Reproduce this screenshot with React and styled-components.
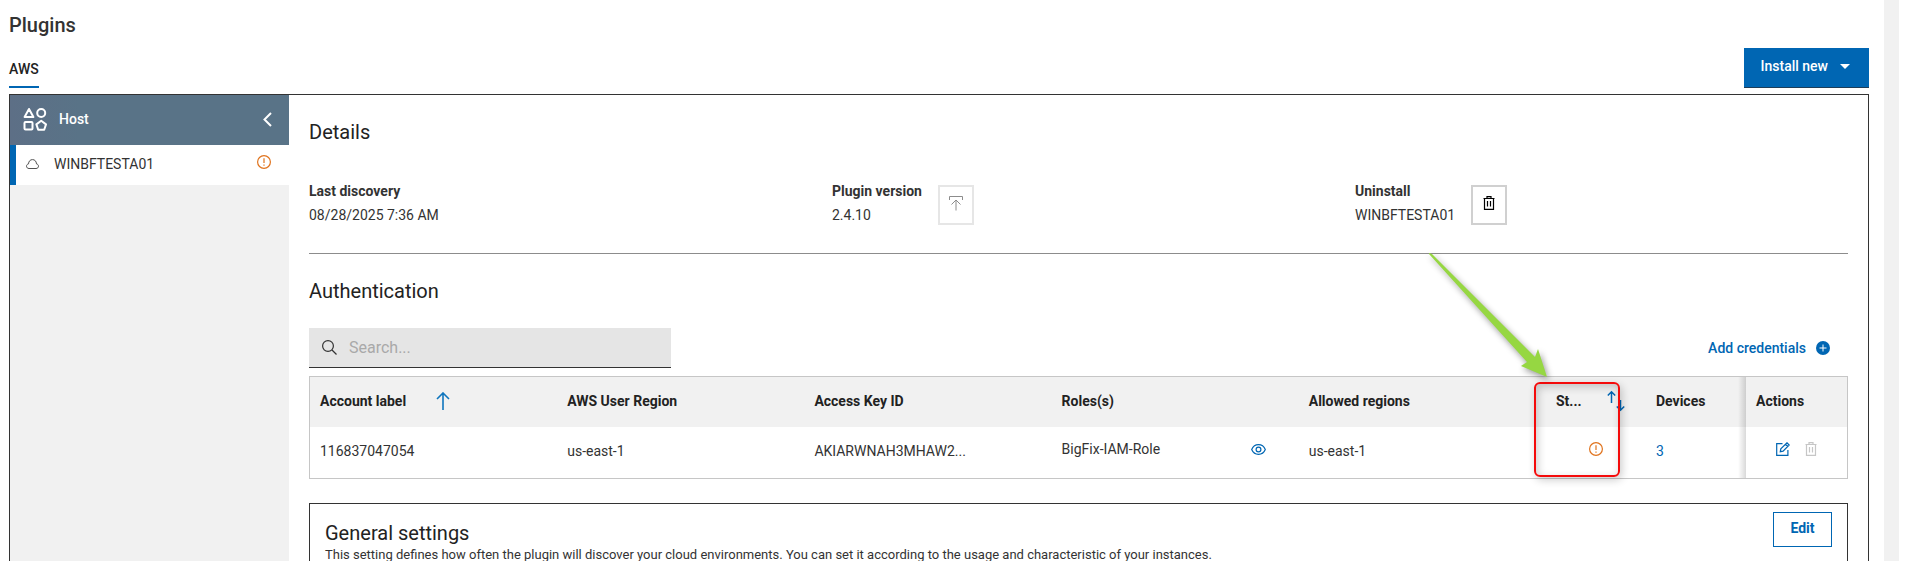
import { useState } from "react";
import styled, { createGlobalStyle, css } from "styled-components";

const GlobalStyle = createGlobalStyle`
  * {
    box-sizing: border-box;
  }
  body {
    margin: 0;
    background: #fff;
    color: #333;
    font-family: Roboto, "Liberation Sans", sans-serif;
    font-size: 14px;
    line-height: 20px;
  }
  h1, h2, p, dl, dd {
    margin: 0;
  }
  button, input {
    font: inherit;
  }
`;

const accounts = [
  {
    label: "116837047054",
    userRegion: "us-east-1",
    accessKey: "AKIARWNAH3MHAW2...",
    role: "BigFix-IAM-Role",
    allowed: "us-east-1",
    devices: 3,
  },
];

const WarningIcon = ({ label }) => (
  <svg width="14" height="14" viewBox="0 0 14 14" fill="none" stroke="#e0731d" role="img" aria-label={label}>
    <circle cx="7" cy="7" r="6.4" strokeWidth="1.2" />
    <path d="M7 3.2v4.9M7 9.6v1.2" strokeWidth="1.2" />
  </svg>
);

const TrashIcon = () => (
  <svg width="12" height="14" viewBox="0 0 12 14" fill="none" stroke="currentColor" strokeWidth="1.2">
    <path d="M0.5 2.5h11M1.5 2.5v10.9h9V2.5M4 2.5v-1.800h4v1.800M4.5 5v5.5M7.5 5v5.5" />
  </svg>
);

const ShapesIcon = () => (
  <svg width="24" height="24" viewBox="0 0 24 24" fill="none" stroke="#fff" strokeWidth="2" strokeLinejoin="round">
    <path d="M6 2L10.4 10H1.6Z" />
    <circle cx="18.2" cy="6" r="4" />
    <rect x="1.5" y="15" width="8" height="7.5" rx="1" />
    <path d="M18.2 13.8l4.8 3.6-1.8 5.3h-6l-1.8-5.3z" />
  </svg>
);

const UploadIcon = () => (
  <svg width="14" height="15" viewBox="0 0 14 15" fill="none" stroke="currentColor">
    <path d="M0.5 4V0.5h13V4M7 14.5V4M2.5 8.5L7 4l4.5 4.5" />
  </svg>
);

export default function App() {
  const [search, setSearch] = useState("");

  const rows = accounts.filter((a) => a.label.includes(search));

  return (
    <>
      <GlobalStyle />
      <Page>
        <Content>
          <Title>Plugins</Title>
          <TabBar>
            <Tab href="#aws">AWS</Tab>
            <InstallButton type="button">
              Install new
              <svg width="10" height="5" viewBox="0 0 10 5" fill="#fff">
                <path d="M0 0h10L5 5z" />
              </svg>
            </InstallButton>
          </TabBar>

          <Panel>
            <Sidebar>
              <SidebarHeader>
                <ShapesIcon />
                <span>Host</span>
                <CollapseButton type="button" aria-label="Collapse">
                  <svg width="9" height="15" viewBox="0 0 9 15" fill="none" stroke="#fff" strokeWidth="2">
                    <path d="M8 1L1.5 7.5 8 14" />
                  </svg>
                </CollapseButton>
              </SidebarHeader>
              <HostItem href="#host">
                <svg width="13" height="10" viewBox="0 0 13 10" fill="none" stroke="#525252">
                  <path d="M3 9.500C1.500 9.500.5 8.500.5 7.200c0-1.200.8-2.100 2-2.300C2.700 2.200 4.200.6 6.500.6s3.800 1.600 4 4.300c1.200.2 2 1.100 2 2.300 0 1.300-1 2.300-2.500 2.300z" />
                </svg>
                <span>WINBFTESTA01</span>
                <ItemStatus>
                  <WarningIcon label="Host warning" />
                </ItemStatus>
              </HostItem>
            </Sidebar>

            <Main>
              <Heading>Details</Heading>
              <Details>
                <Detail>
                  <dl>
                    <Term>Last discovery</Term>
                    <dd>08/28/2025 7:36 AM</dd>
                  </dl>
                </Detail>
                <Detail>
                  <dl>
                    <Term>Plugin version</Term>
                    <dd>2.4.10</dd>
                  </dl>
                  <SquareButton type="button" aria-label="Upgrade plugin" disabled>
                    <UploadIcon />
                  </SquareButton>
                </Detail>
                <Detail>
                  <dl>
                    <Term>Uninstall</Term>
                    <dd>WINBFTESTA01</dd>
                  </dl>
                  <SquareButton type="button" aria-label="Uninstall plugin">
                    <TrashIcon />
                  </SquareButton>
                </Detail>
              </Details>

              <Heading>Authentication</Heading>
              <Toolbar>
                <SearchBox>
                  <svg width="15" height="15" viewBox="0 0 15 15" fill="none" stroke="#333" strokeWidth="1.2">
                    <circle cx="6" cy="6" r="5.4" />
                    <path d="M10 10l4.5 4.5" />
                  </svg>
                  <input
                    type="text"
                    aria-label="Search accounts"
                    placeholder="Search..."
                    value={search}
                    onChange={(e) => setSearch(e.target.value)}
                  />
                </SearchBox>
                <AddButton type="button">
                  Add credentials
                  <svg width="14" height="14" viewBox="0 0 14 14">
                    <circle cx="7" cy="7" r="7" fill="#0066b3" />
                    <path d="M7 3.5v7M3.5 7h7" stroke="#fff" />
                  </svg>
                </AddButton>
              </Toolbar>

              <Table>
                <colgroup>
                  <col />
                  <col />
                  <col />
                  <col />
                  <col />
                  <SmallCol $width="100px" />
                  <SmallCol $width="100px" />
                  <SmallCol $width="101px" />
                </colgroup>
                <thead>
                  <tr>
                    <Th>
                      <HeadCell $gap="30px">
                        Account label
                        <svg width="14" height="18" viewBox="0 0 14 18" fill="none" stroke="#0f75bd" strokeWidth="1.6">
                          <path d="M7 18V1M1 7l6-6 6 6" />
                        </svg>
                      </HeadCell>
                    </Th>
                    <Th>AWS User Region</Th>
                    <Th>Access Key ID</Th>
                    <Th>Roles(s)</Th>
                    <Th>Allowed regions</Th>
                    <StatusTh>
                      <HeadCell $gap="25px">
                        <span>St...</span>
                        <svg width="18" height="22" viewBox="0 0 18 22" fill="none" stroke="#0066b3" strokeWidth="1.5">
                          <path d="M4.5 13V2M0.8 5.5L4.5 1.8l3.7 3.7M13.5 10v10M9.8 16.5l3.7 3.7 3.7-3.7" />
                        </svg>
                      </HeadCell>
                      <Highlight />
                      <Pointer width="130" height="136" viewBox="0 0 130 136">
                        <path d="M4 4L7 5L110 108L113 100L122 128L96 117L102 113L4 5Z" />
                      </Pointer>
                    </StatusTh>
                    <Th $fade>Devices</Th>
                    <Th>Actions</Th>
                  </tr>
                </thead>
                <tbody>
                  {rows.map((row) => (
                    <tr key={row.label}>
                      <Td>{row.label}</Td>
                      <Td>{row.userRegion}</Td>
                      <Td>{row.accessKey}</Td>
                      <Td $raised>
                        <RoleCell>
                          {row.role}
                          <IconButton type="button" aria-label="View role">
                            <svg width="15" height="11" viewBox="0 0 15 11" fill="none" stroke="currentColor" strokeWidth="1.2">
                              <path d="M.7 5.5C2 2.4 4.500.7 7.500.7s5.500 1.700 6.800 4.800c-1.300 3.100-3.800 4.800-6.800 4.800S2 8.600.7 5.500z" />
                              <circle cx="7.5" cy="5.5" r="2.4" />
                            </svg>
                          </IconButton>
                        </RoleCell>
                      </Td>
                      <Td>{row.allowed}</Td>
                      <Td $raised>
                        <StatusCell>
                          <WarningIcon label="Account warning" />
                        </StatusCell>
                      </Td>
                      <Td $fade>
                        <DeviceLink href="#devices">{row.devices}</DeviceLink>
                      </Td>
                      <Td $raised>
                        <Actions>
                          <IconButton type="button" aria-label="Edit account">
                            <svg width="14" height="14" viewBox="0 0 14 14" fill="none" stroke="currentColor" strokeWidth="1.2">
                              <path d="M6.5 1.6H.7v11.700h11.200V8M4.300 9.700l.5-2.800L11 .8l2.200 2.200L7.100 9.200zM9.500 2.300l2.200 2.200" />
                            </svg>
                          </IconButton>
                          <IconButton type="button" aria-label="Delete account" disabled>
                            <TrashIcon />
                          </IconButton>
                        </Actions>
                      </Td>
                    </tr>
                  ))}
                </tbody>
              </Table>

              <Settings>
                <div>
                  <SettingsHeading>General settings</SettingsHeading>
                  <Hint>
                    This setting defines how often the plugin will discover your cloud environments. You can set it
                    according to the usage and characteristic of your instances.
                  </Hint>
                </div>
                <EditButton type="button">Edit</EditButton>
              </Settings>
            </Main>
          </Panel>
        </Content>
        <ScrollTrack />
      </Page>
    </>
  );
}

const Page = styled.div`
  display: flex;
  height: 100vh;
  padding-right: 12px;
  overflow: hidden;
`;

const Content = styled.div`
  flex: 1;
  min-width: 0;
  padding: 13px 15px 0 9px;
`;

const ScrollTrack = styled.div`
  width: 15px;
  background: #f1f1f1;
`;

const Title = styled.h1`
  font-size: 20px;
  font-weight: 500;
  line-height: 24px;
`;

const TabBar = styled.nav`
  display: flex;
  align-items: flex-end;
  justify-content: space-between;
  margin: 11px 0 6px;
`;

const Tab = styled.a`
  padding-bottom: 7px;
  border-bottom: 2px solid #0066b3;
  color: #222;
  font-weight: 500;
  text-decoration: none;
`;

const InstallButton = styled.button`
  display: flex;
  align-items: center;
  gap: 12px;
  height: 40px;
  padding: 0 19px 3px 17px;
  border: 0;
  border-bottom: 1px solid #1d3d59;
  background: #0066b3;
  color: #fff;
  font-weight: 500;
`;

const Panel = styled.section`
  display: flex;
  min-height: 620px;
  border: 1px solid #333;
`;

const Sidebar = styled.aside`
  flex: 0 0 279px;
  background: #f1f1f1;
`;

const SidebarHeader = styled.div`
  display: flex;
  align-items: center;
  gap: 12px;
  height: 50px;
  padding: 0 17px 2px 13px;
  background: linear-gradient(90deg, #5d6f86, #597387 25%);
  color: #fff;
  font-weight: 500;
`;

const CollapseButton = styled.button`
  display: flex;
  margin-left: auto;
  padding: 0;
  border: 0;
  background: none;
`;

const HostItem = styled.a`
  display: flex;
  align-items: center;
  gap: 15px;
  height: 40px;
  padding: 0 18px 2px 10px;
  border-left: 6px solid #0066b3;
  background: #fff;
  color: #333;
  text-decoration: none;
`;

const ItemStatus = styled.div`
  display: flex;
  margin-left: auto;
  padding-bottom: 4px;
`;

const Main = styled.main`
  flex: 1;
  min-width: 0;
  padding: 25px 20px 0;
`;

const Heading = styled.h2`
  color: #222;
  font-size: 20px;
  font-weight: 400;
  line-height: 24px;
`;

const Details = styled.div`
  display: grid;
  grid-template-columns: repeat(3, 1fr);
  gap: 30px;
  margin-bottom: 25px;
  padding: 37px 0 24px;
  border-bottom: 1px solid #8c8c8c;
`;

const Detail = styled.div`
  display: flex;
  align-items: flex-start;
  gap: 16px;
  height: 48px;
`;

const Term = styled.dt`
  margin-bottom: 4px;
  font-weight: 700;
`;

const SquareButton = styled.button`
  display: flex;
  justify-content: center;
  width: 36px;
  height: 40px;
  margin-top: 4px;
  padding: 9px 0 0;
  border: 2px solid #d0d0d0;
  background: #fff;
  color: #000;

  &:disabled {
    border-color: #e6e6e6;
    color: #8c8c8c;
  }
`;

const Toolbar = styled.div`
  display: flex;
  align-items: center;
  justify-content: space-between;
  margin: 25px 0 8px;
  padding-right: 18px;
`;

const SearchBox = styled.label`
  display: flex;
  align-items: center;
  gap: 12px;
  width: 362px;
  height: 40px;
  padding: 0 13px;
  border-bottom: 1px solid #333;
  background: #e5e5e5;

  input {
    flex: 1;
    padding: 0;
    border: 0;
    outline: 0;
    background: none;
    font-size: 16px;
  }
  input::placeholder {
    color: #a9a9a9;
  }
`;

const AddButton = styled.button`
  display: flex;
  align-items: center;
  gap: 10px;
  padding: 0;
  border: 0;
  background: none;
  color: #0066b3;
  font-weight: 500;
`;

const Table = styled.table`
  width: 100%;
  border: 1px solid #c6c6c6;
  border-spacing: 0;
  table-layout: fixed;
`;

const SmallCol = styled.col`
  width: ${(p) => p.$width};
`;

const fade = css`
  background-image: linear-gradient(to left, rgba(0, 0, 0, 0.15), rgba(0, 0, 0, 0) 8px);
`;

const Th = styled.th`
  height: 50px;
  padding: 0 10px 2px;
  background-color: #f1f1f1;
  color: #222;
  font-weight: 700;
  text-align: left;
  white-space: nowrap;
  ${(p) => p.$fade && fade}
`;

const StatusTh = styled(Th)`
  position: relative;
  z-index: 1;
`;

const HeadCell = styled.div`
  display: flex;
  align-items: center;
  gap: ${(p) => p.$gap};

  svg {
    flex: none;
  }
`;

const Highlight = styled.span`
  position: absolute;
  top: 5px;
  left: -12px;
  width: 86px;
  height: 95px;
  border: 2px solid #f40b0b;
  border-radius: 6px;
  box-shadow: 2px 3px 8px rgba(0, 0, 0, 0.2), inset 2px 3px 8px rgba(0, 0, 0, 0.2);
  pointer-events: none;
`;

const Pointer = styled.svg`
  position: absolute;
  top: -128px;
  left: -121px;
  fill: #96d742;
  filter: drop-shadow(2px 3px 3px rgba(0, 0, 0, 0.4));
  overflow: visible;
  pointer-events: none;
`;

const Td = styled.td`
  height: 51px;
  padding: ${(p) => (p.$raised ? "0 10px 7px" : "0 10px 3px")};
  ${(p) => p.$fade && fade}
`;

const RoleCell = styled.div`
  display: flex;
  align-items: center;
  justify-content: space-between;
  padding-right: 23px;
`;

const StatusCell = styled.div`
  display: flex;
  justify-content: center;
`;

const DeviceLink = styled.a`
  color: #0066b3;
  text-decoration: none;
`;

const Actions = styled.div`
  display: flex;
  gap: 15px;
  padding-left: 20px;
`;

const IconButton = styled.button`
  display: flex;
  padding: 0;
  border: 0;
  background: none;
  color: #0066b3;

  &:disabled {
    color: #c6c6c6;
  }
`;

const Settings = styled.section`
  display: flex;
  align-items: flex-start;
  justify-content: space-between;
  min-height: 160px;
  margin-top: 24px;
  padding: 8px 15px;
  border: 1px solid #333;
`;

const SettingsHeading = styled(Heading)`
  padding-top: 9px;
`;

const Hint = styled.p`
  font-size: 13px;
`;

const EditButton = styled.button`
  width: 59px;
  height: 35px;
  padding: 0 0 4px;
  border: 1px solid #0066b3;
  background: #fff;
  color: #0066b3;
  font-weight: 700;
`;
